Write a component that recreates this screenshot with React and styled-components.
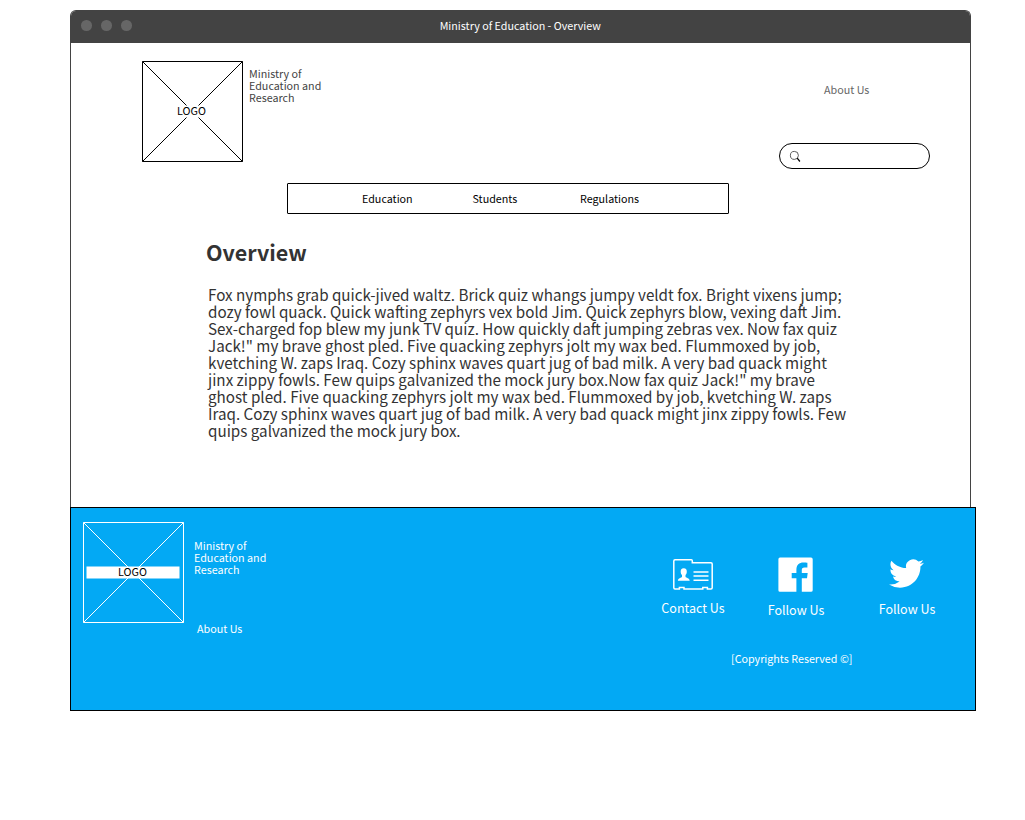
import React from "react";
import styled, { createGlobalStyle } from "styled-components";

const GlobalStyle = createGlobalStyle`
  * { box-sizing: border-box; }
  body {
    margin: 0;
    background: #fff;
    font-family: "Noto Sans CJK SC", "Noto Sans", sans-serif;
  }
`;

const Page = styled.div`
  width: 1025px;
  height: 820px;
  padding: 10px 0 0 70px;
  overflow: hidden;
`;

const Window = styled.section`
  width: 901px;
  height: 497px;
  border: 1px solid #434343;
  border-bottom: 0;
  border-radius: 6px 6px 0 0;
  overflow: hidden;
`;

const TitleBar = styled.div`
  display: grid;
  grid-template-columns: 1fr auto 1fr;
  align-items: start;
  height: 32px;
  padding: 9px 10.500px 0 10px;
  background: #434343;
`;

const Dots = styled.div`
  display: flex;
  gap: 9.500px;
  padding-left: 0.250px;
`;

const Dot = styled.i`
  width: 10.500px;
  height: 10.500px;
  border-radius: 50%;
  background: #666;
`;

const Label = styled.span`
  display: block;
  font-size: ${(p) => p.$size || 10.74}px;
  line-height: ${(p) => p.$line || 12}px;
  color: ${(p) => p.$color || "#000"};
  white-space: pre;
`;

const TightF = styled.span`
  letter-spacing: -0.8px;
`;

const Header = styled.header`
  display: flex;
  align-items: flex-start;
  height: 140px;
  padding: 18px 40px 0 71px;
`;

const LogoFrame = styled.div`
  display: grid;
  flex: none;
  width: 101px;
  height: 101px;
  > * { grid-area: 1 / 1; }
`;

const LogoText = styled.div`
  z-index: 1;
  display: flex;
  justify-content: center;
  margin: 44px 2px 0 0;
`;

const HeaderName = styled.div`
  margin: 7px 0 0 6px;
`;

const HeaderTools = styled.div`
  display: flex;
  flex-direction: column;
  margin: 23px 0 0 auto;
`;

const AboutLink = styled.div`
  padding-left: 45px;
`;

const SearchBox = styled.div`
  display: flex;
  align-items: center;
  width: 151px;
  height: 26px;
  margin-top: 47px;
  padding-left: 9px;
  border: 1px solid #000;
  border-radius: 13px;
`;

const Nav = styled.nav`
  display: flex;
  width: 442px;
  height: 31px;
  margin-left: 216px;
  padding: 9px 0 0 74px;
  border: 1px solid #000;
  border-radius: 1px;
`;

const NavItem = styled.div`
  width: ${(p) => p.$width}px;
`;

const Article = styled.article`
  padding: 23px 0 0 135px;
`;

const Heading = styled.h1`
  margin: 0;
  font-size: 21.49px;
  line-height: 30px;
  font-weight: 700;
  color: #333;
`;

const Body = styled.div`
  margin: 19px 0 0 2px;
`;

const Footer = styled.footer`
  display: flex;
  width: 906px;
  height: 204px;
  padding: 14px 12px 0;
  border: 1px solid #000;
  background: #03a9f4;
`;

const FooterInfo = styled.div`
  display: flex;
  flex-direction: column;
  gap: 47px;
  margin: 18px 0 0 10px;
`;

const FooterAbout = styled.div`
  padding-left: 3px;
`;

const FooterRight = styled.div`
  margin: 35px 0 0 auto;
  width: 302px;
`;

const Contacts = styled.div`
  display: flex;
  align-items: flex-start;
  height: 90px;
`;

const Contact = styled.div`
  display: flex;
  flex-direction: column;
  align-items: center;
  gap: ${(p) => p.$gap}px;
  width: ${(p) => p.$width}px;
  margin: ${(p) => p.$top || 0}px ${(p) => p.$after || 0}px 0 0;
`;

const Copyright = styled.div`
  margin: 6px 0 0 70px;
`;

const bodyLines = [
  "Fox nymphs grab quick-jived waltz. Brick quiz whangs jumpy veldt fox. Bright vixens jump;",
  "dozy fowl quack. Quick wafting zephyrs vex bold Jim. Quick zephyrs blow, vexing daft Jim.",
  "Sex-charged fop blew my junk TV quiz. How quickly daft jumping zebras vex. Now fax quiz",
  "Jack!\" my brave ghost pled. Five quacking zephyrs jolt my wax bed. Flummoxed by job,",
  "kvetching W. zaps Iraq. Cozy sphinx waves quart jug of bad milk. A very bad quack might",
  "jinx zippy fowls. Few quips galvanized the mock jury box.Now fax quiz Jack!\" my brave",
  "ghost pled. Five quacking zephyrs jolt my wax bed. Flummoxed by job, kvetching W. zaps",
  "Iraq. Cozy sphinx waves quart jug of bad milk. A very bad quack might jinx zippy fowls. Few",
  "quips galvanized the mock jury box.",
];

// Joins the crossbars of every "ft" pair.
function joinFt(text) {
  return text.split(/f(?=t)/).map((part, i) => (
    <React.Fragment key={i}>
      {i > 0 && <TightF>f</TightF>}
      {part}
    </React.Fragment>
  ));
}

function Logo({ color }) {
  return (
    <LogoFrame>
      <svg width="101" height="101" fill="none">
        <path d="M.5.5h100v100H.5zM.5.5l100 100M100.5.5L.5 100.5" stroke={color} />
        <rect x="3.500" y="44.500" width="93" height="12" fill="#fff" />
      </svg>
      <LogoText>
        <Label>LOGO</Label>
      </LogoText>
    </LogoFrame>
  );
}

function Name({ color }) {
  return (
    <>
      {["Ministry of", "Education and", "Research"].map((t) => (
        <Label key={t} $color={color}>{t}</Label>
      ))}
    </>
  );
}

const SearchIcon = () => (
  <svg width="13" height="13" viewBox="0 0 13 13" fill="none" stroke="#333">
    <circle cx="5.4" cy="5.4" r="4" strokeWidth=".8" />
    <path d="M8.2 8.2l2.700 3.300" stroke="#000" strokeWidth="1.300" />
  </svg>
);

const CardIcon = () => (
  <svg width="40" height="31" viewBox="0 0 40 31" fill="#fff">
    <path
      d="M2 .8h16.3q1 0 1 1v1.9H38q1.2 0 1.2 1.2v23.9q0 1.2-1.2 1.2h-3.6v-1.600h-4.600V30H11v-1.600H6.400V30H2Q.8 30 .8 28.800V2Q.8.8 2 .8z"
      fill="none"
      stroke="#fff"
      strokeWidth="1.500"
    />
    <path d="M10.700 9.200c2.300 0 3.300 1.500 3.100 3.700-.1 1.500-.7 2.500-1.300 3.200v1.700c.5 1.300 4.200 1.300 4.200 3.900H4.900c0-2.600 3.600-2.600 4.100-3.900v-1.700c-.7-.7-1.200-1.700-1.300-3.200-.2-2.200.8-3.700 3-3.700z" />
    <path d="M20.500 12.900h15M20.500 17h15M20.500 21.200h15" stroke="#fff" strokeWidth="1.500" />
  </svg>
);

const FacebookIcon = () => (
  <svg width="36" height="35" viewBox="0 0 36 35" fill="#fff">
    <path d="M2 .5h31q1.700 0 1.700 1.700v31q0 1.600-1.700 1.600h-9.200V21.300H29l.7-5.200h-5.900v-3c0-1.600.5-2.600 2.700-2.600h2.900V5.800c-.6-.1-2.300-.2-4-.2-4.200 0-7 2.500-7 7v3.500h-4.700v5.200h4.700v13.500H2Q.4 34.800.4 33.200v-31Q.4.500 2 .5z" />
  </svg>
);

const TwitterIcon = () => (
  <svg width="36" height="29" viewBox="0 0 36 29" fill="#fff">
    <path
      transform="scale(1.458 1.450) translate(0 -2)"
      d="M23.953 4.570a10 10 0 01-2.825.775 4.958 4.958 0 002.163-2.723c-.951.555-2.005.959-3.127 1.184a4.920 4.920 0 00-8.384 4.482C7.690 8.095 4.067 6.130 1.640 3.162a4.822 4.822 0 00-.666 2.475c0 1.710.870 3.213 2.188 4.096a4.904 4.904 0 01-2.228-.616v.060a4.923 4.923 0 003.946 4.827 4.996 4.996 0 01-2.212.085 4.936 4.936 0 004.604 3.417 9.867 9.867 0 01-6.102 2.105c-.390 0-.779-.023-1.170-.067a13.995 13.995 0 007.557 2.209c9.053 0 13.998-7.496 13.998-13.985 0-.210 0-.420-.015-.630A9.935 9.935 0 0024 4.590z"
    />
  </svg>
);

export default function App() {
  return (
    <Page>
      <GlobalStyle />
      <Window>
        <TitleBar>
          <Dots>
            <Dot />
            <Dot />
            <Dot />
          </Dots>
          <Label $color="#fff">Ministry of Education - Overview</Label>
        </TitleBar>
        <Header>
          <Logo color="#000" />
          <HeaderName>
            <Name color="#434343" />
          </HeaderName>
          <HeaderTools>
            <AboutLink>
              <Label $color="#666">About Us</Label>
            </AboutLink>
            <SearchBox>
              <SearchIcon />
            </SearchBox>
          </HeaderTools>
        </Header>
        <Nav>
          <NavItem $width={110.5}><Label>Education</Label></NavItem>
          <NavItem $width={107.5}><Label>Students</Label></NavItem>
          <NavItem $width={80}><Label>Regulations</Label></NavItem>
        </Nav>
        <Article>
          <Heading>Overview</Heading>
          <Body>
            {bodyLines.map((t) => (
              <Label key={t} $size={15.21} $line={17} $color="#333">{joinFt(t)}</Label>
            ))}
          </Body>
        </Article>
      </Window>
      <Footer>
        <Logo color="#fff" />
        <FooterInfo>
          <div>
            <Name color="#fff" />
          </div>
          <FooterAbout>
            <Label $color="#fff">About Us</Label>
          </FooterAbout>
        </FooterInfo>
        <FooterRight>
          <Contacts>
            <Contact $width={64} $gap={11} $top={2} $after={43}>
              <CardIcon />
              <Label $size={12.53} $line={14} $color="#fff">Contact Us</Label>
            </Contact>
            <Contact $width={56} $gap={11} $after={55}>
              <FacebookIcon />
              <Label $size={12.53} $line={14} $color="#fff">Follow Us</Label>
            </Contact>
            <Contact $width={56} $gap={14} $top={2}>
              <TwitterIcon />
              <Label $size={12.53} $line={14} $color="#fff">Follow Us</Label>
            </Contact>
          </Contacts>
          <Copyright>
            <Label $color="#fff">[Copyrights Reserved ©]</Label>
          </Copyright>
        </FooterRight>
      </Footer>
    </Page>
  );
}
